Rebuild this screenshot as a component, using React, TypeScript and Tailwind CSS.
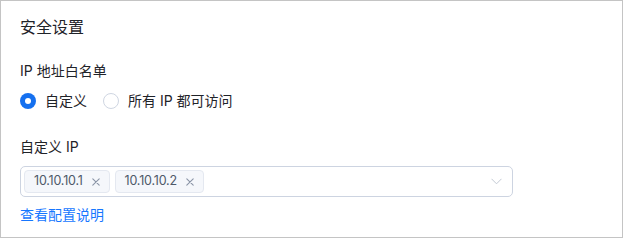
import { useState } from "react";

type Option = { id: string; label: string };

const options: Option[] = [
  { id: "custom", label: "自定义" },
  { id: "all", label: "所有 IP 都可访问" },
];

function Radio({ checked, label, onClick }: { checked: boolean; label: string; onClick: () => void }) {
  return (
    <button type="button" onClick={onClick} className="flex items-center gap-[9px]">
      {checked ? (
        <span className="flex h-4 w-4 items-center justify-center rounded-full bg-[#1570ef]">
          <span className="h-[6px] w-[6px] rounded-full bg-white" />
        </span>
      ) : (
        <span className="h-4 w-4 rounded-full border border-[#cfd6e2] bg-white" />
      )}
      <span className="text-[14px] leading-[22px] text-[#1f2329]">{label}</span>
    </button>
  );
}

function IpTag({ ip }: { ip: string }) {
  return (
    <span className="flex h-[23px] items-center gap-[9px] rounded-[4px] border border-[#e4e8f0] bg-[#f5f7fb] pl-[9px] pr-[9px]">
      <span className="text-[12.5px] leading-none tracking-[-0.2px] text-[#4e5969]">{ip}</span>
      <svg width="8" height="8" viewBox="0 0 8 8" className="text-[#8a94a6]">
        <path d="M0.8 0.8 L7.2 7.2 M7.2 0.8 L0.8 7.2" stroke="currentColor" strokeWidth="1.1" strokeLinecap="round" />
      </svg>
    </span>
  );
}

export default function App() {
  const [mode, setMode] = useState("custom");
  const ips = ["10.10.10.1", "10.10.10.2"];

  return (
    <div
      className="flex h-[238px] w-[623px] flex-col border border-[#c4c4c4] bg-white pl-[19px] pt-[14px]"
      style={{ fontFamily: "Inter, 'Noto Sans CJK SC', sans-serif" }}
    >
      <h1 className="text-[16px] leading-[24px] text-[#1f2329]">安全设置</h1>

      <div className="mt-[21px] text-[14px] leading-[22px] text-[#1f2329]">IP 地址白名单</div>
      <div className="mt-[8px] flex items-center gap-[16px]">
        {options.map((o) => (
          <Radio key={o.id} checked={mode === o.id} label={o.label} onClick={() => setMode(o.id)} />
        ))}
      </div>

      <div className="mt-[24px] text-[14px] leading-[22px] text-[#1f2329]">自定义 IP</div>
      <div className="mt-[8px] flex h-[31px] w-[493px] items-center justify-between rounded-[5px] border border-[#cdd4e1] pl-[3px] pr-[10px]">
        <div className="flex items-center gap-[5px]">
          {ips.map((ip) => (
            <IpTag key={ip} ip={ip} />
          ))}
        </div>
        <svg width="11" height="7" viewBox="0 0 11 7" className="text-[#c3c9d4]">
          <path d="M0.5 0.8 L5.5 5.8 L10.5 0.8" fill="none" stroke="currentColor" strokeWidth="1" />
        </svg>
      </div>

      <a href="#" className="mt-[7px] w-fit text-[14px] leading-[22px] text-[#1677ff]">
        查看配置说明
      </a>
    </div>
  );
}
